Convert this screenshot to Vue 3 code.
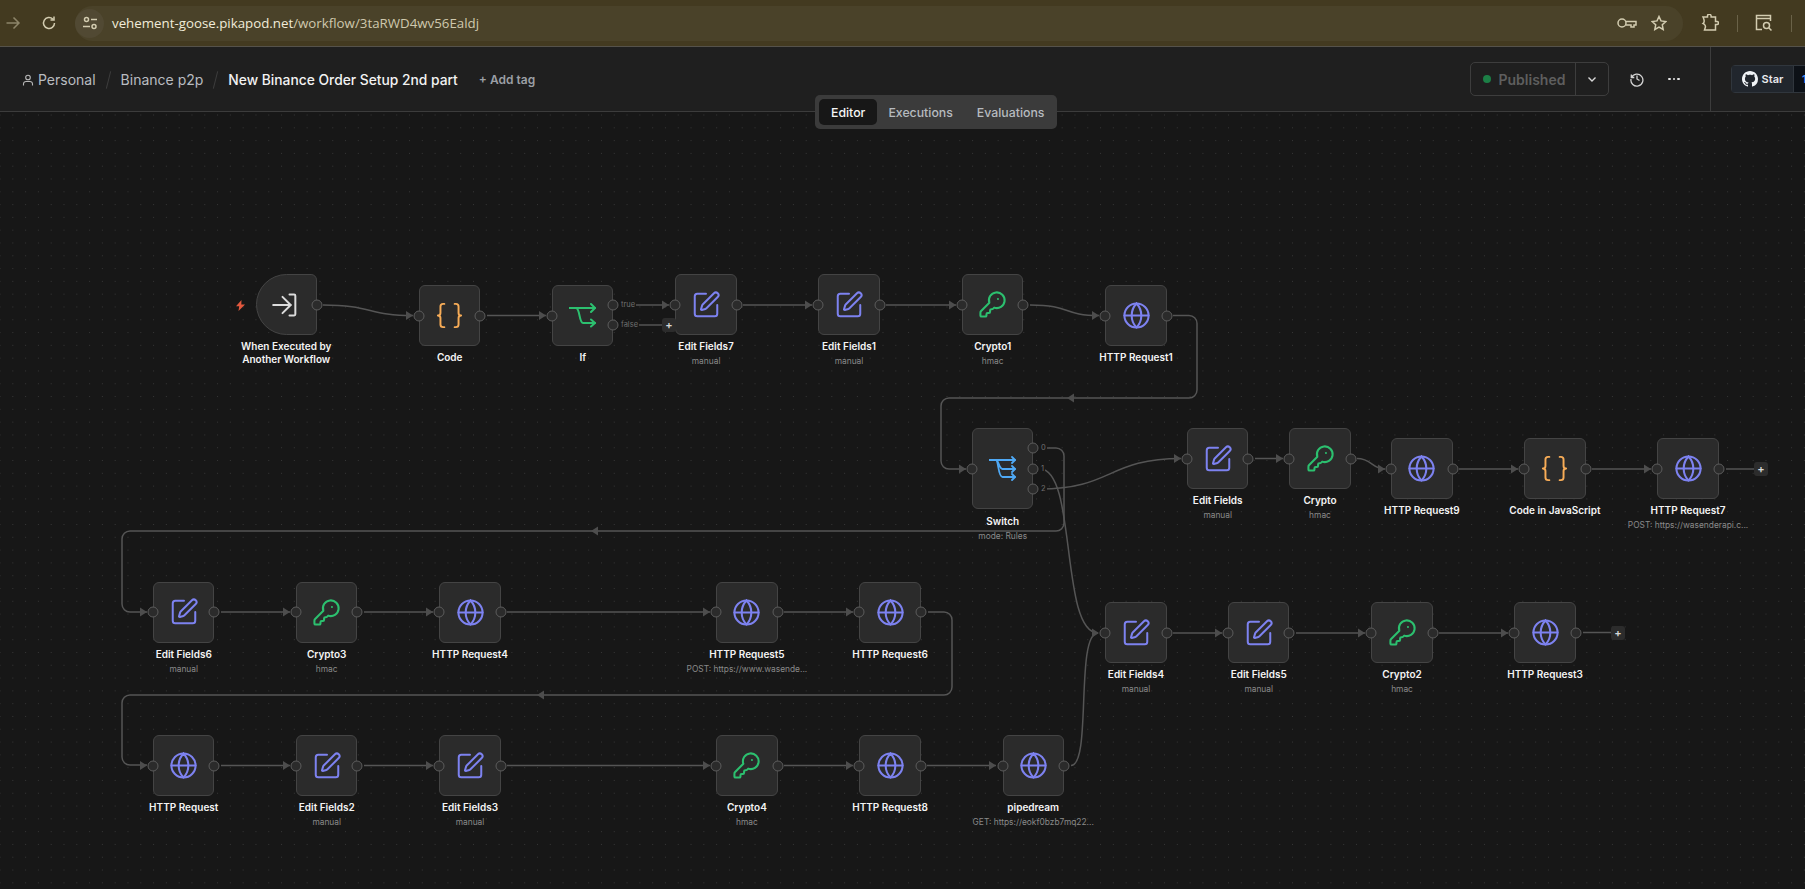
<script setup>
const TOP = 112

const icons = {
  edit: { vb: '0 0 24 24', size: 30, color: '#7d82f0', sw: 1.6, paths: ['M12 3H5a2 2 0 0 0-2 2v14a2 2 0 0 0 2 2h14a2 2 0 0 0 2-2v-7', 'M18.375 2.625a1 1 0 0 1 3 3l-9.013 9.014a2 2 0 0 1-.853.505l-2.873.84a.5.5 0 0 1-.62-.62l.84-2.873a2 2 0 0 1 .506-.852z'] },
  key: { vb: '0 0 24 24', size: 29, color: '#2cc06f', sw: 1.7, paths: ['M2.586 17.414A2 2 0 0 0 2 18.828V21a1 1 0 0 0 1 1h3a1 1 0 0 0 1-1v-1a1 1 0 0 1 1-1h1a1 1 0 0 0 1-1v-1a1 1 0 0 1 1-1h.172a2 2 0 0 0 1.414-.586l.814-.814a6.5 6.5 0 1 0-4-4z', 'M16.5 7.5h.01'] },
  globe: { vb: '0 0 24 24', size: 29, color: '#7d82f0', sw: 1.7, paths: ['M22 12a10 10 0 1 1-20 0 10 10 0 0 1 20 0z', 'M12 2a14.5 14.5 0 0 0 0 20 14.5 14.5 0 0 0 0-20', 'M2 12h20'] },
  code: { vb: '0 0 24 24', size: 31, color: '#f7ac57', sw: 1.5, paths: ['M8 3H7a2 2 0 0 0-2 2v5a2 2 0 0 1-2 2 2 2 0 0 1 2 2v5c0 1.1.9 2 2 2h1', 'M16 21h1a2 2 0 0 0 2-2v-5c0-1.1.9-2 2-2a2 2 0 0 1-2-2V5a2 2 0 0 0-2-2h-1'] },
  branch: { vb: '0 0 27 25', size: 27, color: '#2cc06f', sw: 2, paths: ['M0 5h26', 'M22 1l4 4-4 4', 'M7 5c4 0 3 15 7 15h12', 'M22 16.5l4 3.5-4 3.5'] },
  route: { vb: '0 0 27 23', size: 27, color: '#4fa9f5', sw: 1.8, paths: ['M0 3h26', 'M23 0l3 3-3 3', 'M7 3c2.500 0 3 9 6.500 9h12.500', 'M23 9l3 3-3 3', 'M7 3c2.500 0 2 17 6.500 17h12.500', 'M23 17l3 3-3 3'] },
  enter: { vb: '0 0 24 24', size: 28, color: '#dcdcdc', sw: 1.7, paths: ['M15 3h4a1 1 0 0 1 1 1v16a1 1 0 0 1-1 1h-4', 'M9 5l7 7-7 7', 'M16 12H1'] },
}

const n = (x, y, icon, name, sub = '', extra = {}) => ({ x, y, icon, name, sub, ...extra })

const nodes = [
  n(255.5, 274, 'enter', 'When Executed by\nAnother Workflow', '', { trigger: true, noIn: true }),
  n(419, 285, 'code', 'Code'),
  n(552, 285, 'branch', 'If', '', { outs: [{ y: 20, label: 'true' }, { y: 40, label: 'false' }] }),
  n(675.4, 274, 'edit', 'Edit Fields7', 'manual'),
  n(818.3, 274, 'edit', 'Edit Fields1', 'manual'),
  n(962, 274, 'key', 'Crypto1', 'hmac'),
  n(1105.3, 285, 'globe', 'HTTP Request1'),
  n(972, 428, 'route', 'Switch', 'mode: Rules', { h: 81, outs: [{ y: 20, label: '0' }, { y: 41, label: '1' }, { y: 61, label: '2' }], inY: 41 }),
  n(1187, 428, 'edit', 'Edit Fields', 'manual'),
  n(1289.3, 428, 'key', 'Crypto', 'hmac'),
  n(1391.2, 438, 'globe', 'HTTP Request9'),
  n(1524.2, 438, 'code', 'Code in JavaScript'),
  n(1657.3, 438, 'globe', 'HTTP Request7', 'POST: https://wasenderapi.c...'),
  n(153, 581.5, 'edit', 'Edit Fields6', 'manual'),
  n(296, 581.5, 'key', 'Crypto3', 'hmac'),
  n(439.3, 581.5, 'globe', 'HTTP Request4'),
  n(716.2, 581.5, 'globe', 'HTTP Request5', 'POST: https://www.wasende...'),
  n(859.3, 581.5, 'globe', 'HTTP Request6'),
  n(153, 735, 'globe', 'HTTP Request'),
  n(296, 735, 'edit', 'Edit Fields2', 'manual'),
  n(439.3, 735, 'edit', 'Edit Fields3', 'manual'),
  n(716.2, 735, 'key', 'Crypto4', 'hmac'),
  n(859.3, 735, 'globe', 'HTTP Request8'),
  n(1002.5, 735, 'globe', 'pipedream', 'GET: https://eokf0bzb7mq22...'),
  n(1105.3, 602, 'edit', 'Edit Fields4', 'manual'),
  n(1228, 602, 'edit', 'Edit Fields5', 'manual'),
  n(1371.3, 602, 'key', 'Crypto2', 'hmac'),
  n(1514.3, 602, 'globe', 'HTTP Request3'),
]

const nodeStyle = (d) => ({ left: d.x + 'px', top: d.y - TOP + 'px' })

const edges = [
  'M323 305C372 305 368 315.5 413 315.5',
  'M487 315.5H546',
  'M620 305H669',
  'M620 325H663',
  'M743 305H812',
  'M886 305H956',
  'M1030 305C1072 305 1062 315.5 1099 315.5',
  'M1173 315.5H1189a8 8 0 0 1 8 8V390a8 8 0 0 1-8 8H949a8 8 0 0 0-8 8V461a8 8 0 0 0 8 8H966',
  'M1040 448H1056a8 8 0 0 1 8 8V523a8 8 0 0 1-8 8H130a8 8 0 0 0-8 8V604a8 8 0 0 0 8 8H147',
  'M1040 469C1077 469 1060 633 1098 633',
  'M1040 489C1112 489 1108 458.5 1181 458.5',
  'M1255 458.5H1283',
  'M1357 458.5C1372 458.5 1372 469 1385 469',
  'M1459 469H1518',
  'M1592 469H1651',
  'M1726 469H1755',
  'M221 612H290',
  'M364 612H433',
  'M507 612H710',
  'M784 612H853',
  'M928 612H944a8 8 0 0 1 8 8V687a8 8 0 0 1-8 8H130a8 8 0 0 0-8 8V757a8 8 0 0 0 8 8H147',
  'M221 765.5H290',
  'M364 765.5H433',
  'M507 765.5H710',
  'M784 765.5H853',
  'M927 765.5H996',
  'M1071 765.5C1092 765.5 1075 633 1098 633',
  'M1173 633H1222',
  'M1296 633H1365',
  'M1439 633H1508',
  'M1583 632.5H1612',
]

const arrows = [
  [413, 315.5], [546, 315.5], [669, 305], [812, 305], [956, 305], [1099, 315.5], [966, 469],
  [147, 612], [1181, 458.5], [1283, 458.5], [1385, 469], [1518, 469], [1651, 469],
  [290, 612], [433, 612], [710, 612], [853, 612], [147, 765.5], [290, 765.5], [433, 765.5],
  [710, 765.5], [853, 765.5], [996, 765.5], [1099, 633], [1222, 633], [1365, 633], [1508, 633],
]
const arrowPoints = ([x, y]) => `${x},${y} ${x - 7},${y - 4.5} ${x - 7},${y + 4.5}`
const leftArrows = [[1067, 398], [591, 531], [537, 695]]
const leftPoints = ([x, y]) => `${x},${y} ${x + 7},${y - 4.5} ${x + 7},${y + 4.5}`

const pluses = [
  { x: 662, y: 318 },
  { x: 1754, y: 462 },
  { x: 1611, y: 625.5 },
]
const plusStyle = (p) => ({ left: p.x + 'px', top: p.y - TOP + 'px' })
const outTop = (o) => ({ top: o.y + 'px' })
const ghPath = 'M8 0C3.58 0 0 3.58 0 8c0 3.54 2.29 6.53 5.47 7.59.4.07.55-.17.55-.38 0-.19-.01-.82-.01-1.49-2.01.37-2.53-.49-2.69-.94-.09-.23-.48-.94-.82-1.13-.28-.15-.68-.52-.01-.53.63-.01 1.08.58 1.23.82.72 1.21 1.87.87 2.33.66.07-.52.28-.87.51-1.07-1.78-.2-3.64-.89-3.64-3.95 0-.87.31-1.59.82-2.15-.08-.2-.36-1.02.08-2.12 0 0 .67-.21 2.2.82.64-.18 1.32-.27 2-.27.68 0 1.36.09 2 .27 1.53-1.04 2.2-.82 2.2-.82.44 1.1.16 1.92.08 2.12.51.56.82 1.27.82 2.15 0 3.07-1.87 3.75-3.65 3.95.29.25.54.73.54 1.48 0 1.07-.01 1.93-.01 2.2 0 .21.15.46.55.38A8.013 8.013 0 0016 8c0-4.42-3.58-8-8-8z'
</script>

<template>
  <div class="page">
    <div class="chrome">
      <svg class="ci back" width="16" height="16" viewBox="0 0 16 16"><path d="M1.5 8h12.5M8.5 2.5 14 8l-5.500 5.500" /></svg>
      <svg class="ci reload" width="16" height="16" viewBox="0 0 16 16"><path d="M13.500 8a5.500 5.500 0 1 1-1.700-4M13 1.500V5H9.500" /></svg>
      <div class="address">
        <span class="chip">
          <svg class="ci" width="16" height="16" viewBox="0 0 16 16"><circle cx="4.500" cy="4.500" r="2" /><path d="M9 4.500h6M1 11.500h7" /><circle cx="12" cy="11.500" r="2" /></svg>
        </span>
        <span class="url"><span class="host">vehement-goose.pikapod.net</span><span class="path">/workflow/3taRWD4wv56Ealdj</span></span>
        <svg class="ci keyi" width="20" height="12" viewBox="0 0 20 12"><circle cx="5" cy="6" r="4" /><path d="M9 4.500h10v3.500h-2v2h-3V8H9" /></svg>
        <svg class="ci stari" width="16" height="16" viewBox="0 0 16 16"><path d="M8 1.500l2 4.400 4.800.6-3.500 3.300.9 4.700L8 12.200l-4.200 2.300.9-4.700L1.200 6.500 6 5.900z" /></svg>
      </div>
      <svg class="ci puzzle" width="18" height="18" viewBox="0 0 18 18"><path d="M2 3h4.500V2a1.800 1.800 0 0 1 3.600 0v1h4.400v4.500H16a1.500 1.500 0 0 1 0 3h-1.500V16H3.500l.8-2.500c.5-1.500 0-2.500-1.300-3.500L2 9.500c1.500-1 1.500-3.500 0-6.500z" /></svg>
      <span class="sep"></span>
      <svg class="ci lens" width="18" height="18" viewBox="0 0 18 18"><path d="M7 15.500H1.500V1.500h14V7M1.500 4.500h14" /><circle cx="11.500" cy="11.500" r="3" /><path d="M14 14l2.500 2.500" /></svg>
      <span class="sep sep2"></span>
    </div>

    <header class="bar">
      <nav class="crumbs">
        <svg class="person" width="12" height="12" viewBox="0 0 12 12"><circle cx="6" cy="3.500" r="2.300" /><path d="M1.500 11.500V10a2.500 2.500 0 0 1 2.500-2.500h4A2.500 2.500 0 0 1 10.500 10v1.500" /></svg>
        <span class="crumb">Personal</span>
        <span class="slash"></span>
        <span class="crumb">Binance p2p</span>
        <span class="slash"></span>
        <span class="title">New Binance Order Setup 2nd part</span>
        <span class="addtag">+ Add tag</span>
      </nav>
      <div class="actions">
        <div class="publish">
          <span class="pub-main"><span class="dot"></span>Published</span>
          <span class="pub-more">
            <svg width="12" height="12" viewBox="0 0 12 12"><path d="M2.500 4.500 6 8l3.500-3.500" /></svg>
          </span>
        </div>
        <svg class="history" width="16" height="16" viewBox="0 0 16 16"><path d="M2.300 3.500v3h3M2.500 6.500A6 6 0 1 1 2 8M8 4.500V8l2.500 1.500" /></svg>
        <span class="dots"><i></i><i></i><i></i></span>
        <div class="ghwrap">
          <div class="ghstar">
            <span class="ghbtn">
              <svg width="16" height="16" viewBox="0 0 16 16"><path :d="ghPath" /></svg>
              Star
            </span>
            <span class="ghcount">1</span>
          </div>
        </div>
      </div>
    </header>

    <div class="tabs">
      <span class="tab active">Editor</span>
      <span class="tab">Executions</span>
      <span class="tab">Evaluations</span>
    </div>

    <main class="canvas">
      <svg class="wires" width="1805" height="777" viewBox="0 112 1805 777">
        <path v-for="(d, i) in edges" :key="i" :d="d" />
        <polygon v-for="(a, i) in arrows" :key="'a' + i" :points="arrowPoints(a)" />
        <polygon v-for="(a, i) in leftArrows" :key="'l' + i" :points="leftPoints(a)" />
      </svg>

      <div v-for="d in nodes" :key="d.name" class="node" :style="nodeStyle(d)">
        <svg v-if="d.trigger" class="bolt" width="9" height="11" viewBox="0 0 9 11"><path d="M5.500 0 0 6.200h3.200L2.500 11 9 4.500H5.300z" /></svg>
        <div class="box" :class="{ trig: d.trigger, tall: d.h }">
          <svg
            :width="icons[d.icon].size"
            :height="icons[d.icon].size"
            :viewBox="icons[d.icon].vb"
            fill="none"
            :stroke="icons[d.icon].color"
            :stroke-width="icons[d.icon].sw"
            stroke-linecap="round"
            stroke-linejoin="round"
          >
            <path v-for="p in icons[d.icon].paths" :key="p" :d="p" />
          </svg>
        </div>
        <span v-if="!d.noIn" class="port in" :class="{ mid: d.inY }"></span>
        <template v-if="d.outs">
          <template v-for="o in d.outs" :key="o.label">
            <span class="port out" :style="outTop(o)"></span>
            <span class="outlabel" :style="outTop(o)">{{ o.label }}</span>
          </template>
        </template>
        <span v-else class="port out"></span>
        <div class="label" :class="{ lower: d.h }">
          <div class="name">{{ d.name }}</div>
          <div v-if="d.sub" class="sub">{{ d.sub }}</div>
        </div>
      </div>

      <span v-for="p in pluses" :key="p.x" class="plus" :style="plusStyle(p)">+</span>
    </main>
  </div>
</template>

<style>
html, body { margin: 0; background: #171717; overflow: hidden; }
</style>

<style scoped>
.page {
  position: relative;
  width: 1805px;
  height: 889px;
  display: flex;
  flex-direction: column;
  overflow: hidden;
  font-family: Inter, "Liberation Sans", sans-serif;
  background: #171717;
}
.chrome {
  height: 46px;
  flex: none;
  display: flex;
  align-items: center;
  background: #433a20;
  border-bottom: 1px solid #55524a;
  box-sizing: content-box;
}
.ci { fill: none; stroke: #d3ccb0; stroke-width: 1.5; flex: none; }
.back { margin-left: 5px; stroke: #8d8569; }
.reload { margin-left: 20px; }
.address {
  margin-left: 18px;
  width: 1608px;
  height: 35px;
  display: flex;
  align-items: center;
  background: #4a4229;
  border-radius: 18px;
}
.chip {
  width: 29px;
  height: 29px;
  border-radius: 50%;
  background: #514933;
  display: flex;
  align-items: center;
  justify-content: center;
}
.url {
  margin-left: 8px;
  font-family: "Open Sans", "Noto Sans", sans-serif;
  font-size: 13.300px;
  white-space: nowrap;
}
.host { color: #f1ecd9; }
.path { color: #cfc8ad; }
.keyi { margin-left: auto; stroke: #d3ccb0; }
.stari { margin-left: 14px; margin-right: 16px; }
.puzzle { margin-left: 18px; }
.sep { width: 1px; height: 17px; background: #6a6248; margin-left: 18px; flex: none; }
.lens { margin-left: 17px; }
.sep2 { margin-left: 18px; }

.bar {
  height: 64px;
  flex: none;
  display: flex;
  align-items: center;
  background: #1f1f1f;
  border-bottom: 1px solid #3c3c3c;
}
.crumbs { display: flex; align-items: center; padding: 1px 0 0 22px; }
.person { fill: none; stroke: #b8b8b8; stroke-width: 1.100; margin-right: 4px; }
.crumb { font-size: 14px; color: #b9bcc0; white-space: nowrap; }
.slash {
  width: 1px;
  height: 18px;
  margin: 0 12px 0 12px;
  background: #3e3e3e;
  transform: rotate(14deg);
}
.title { font-size: 13.800px; color: #f2f2f2; font-weight: 500; white-space: nowrap; }
.addtag { margin-left: 21px; font-size: 12px; font-weight: 600; color: #9b9fa5; white-space: nowrap; }

.actions { margin-left: auto; display: flex; align-items: center; height: 100%; }
.publish {
  width: 139.500px;
  height: 34px;
  box-sizing: border-box;
  display: flex;
  border: 1px solid #3d3d3d;
  border-radius: 5px;
}
.pub-main {
  flex: 1;
  display: flex;
  align-items: center;
  gap: 8px;
  padding-left: 12px;
  font-size: 14px;
  font-weight: 600;
  color: #5e5e5e;
  border-right: 1px solid #3d3d3d;
}
.dot { width: 8px; height: 8px; border-radius: 50%; background: #1c7f46; }
.pub-more { width: 32px; display: flex; align-items: center; justify-content: center; }
.pub-more svg { fill: none; stroke: #d8d8d8; stroke-width: 1.400; }
.history { fill: none; stroke: #d4d4d4; stroke-width: 1.300; margin-left: 20px; }
.dots { display: flex; gap: 2px; margin-left: 23px; }
.dots i { width: 2.500px; height: 2.500px; border-radius: 50%; background: #e6e6e6; display: block; }
.ghwrap {
  margin-left: 30px;
  width: 95.500px;
  height: 100%;
  box-sizing: border-box;
  border-left: 1px solid #3c3c3c;
  display: flex;
  align-items: center;
  padding-left: 20.500px;
  overflow: hidden;
}
.ghstar {
  display: flex;
  height: 28px;
  flex: none;
  border: 1px solid #30363d;
  border-radius: 4px;
  box-sizing: border-box;
  font-size: 11px;
  font-weight: 600;
}
.ghbtn {
  width: 62px;
  box-sizing: border-box;
  display: flex;
  align-items: center;
  justify-content: center;
  gap: 4px;
  background: #21262d;
  color: #e8eaed;
  border-right: 1px solid #30363d;
}
.ghbtn svg { fill: #f0f3f6; }
.ghcount { width: 30px; padding-left: 8px; background: #0d1117; color: #4493f8; line-height: 26px; }

.tabs {
  position: absolute;
  left: 815px;
  top: 95px;
  z-index: 3;
  width: 242px;
  height: 34px;
  box-sizing: border-box;
  padding: 4px;
  display: flex;
  background: #3b3b3b;
  border-radius: 5px;
  font-size: 12.300px;
  font-weight: 500;
}
.tab {
  display: flex;
  align-items: center;
  padding: 0 12px;
  color: #b6babf;
  white-space: nowrap;
}
.tab.active { background: #171717; color: #f5f5f5; border-radius: 5px; margin-right: -1px; }

.canvas {
  position: relative;
  flex: 1;
  overflow: hidden;
  background-color: #171717;
  background-image: radial-gradient(circle at center, #363636 0.6px, transparent 0.8px);
  background-size: 12.800px 12.800px;
  background-position: -6.400px -3.400px;
}
.wires { position: absolute; left: 0; top: 0; }
.wires path { fill: none; stroke: #555; stroke-width: 1.500; }
.wires polygon { fill: #4d4d4d; }

.node { position: absolute; width: 61.440px; }
.box {
  width: 61.440px;
  height: 61.440px;
  box-sizing: border-box;
  display: flex;
  align-items: center;
  justify-content: center;
  background: #2b2b2b;
  border: 1px solid #444;
  border-radius: 6px;
}
.box.trig { border-radius: 31px 6px 6px 31px; }
.box.tall { height: 81px; }
.bolt { position: absolute; left: -20px; top: 26px; fill: #e2583e; }
.port {
  position: absolute;
  width: 11px;
  height: 11px;
  box-sizing: border-box;
  border: 1px solid #5c5c5c;
  border-radius: 50%;
  background: #2b2b2b;
  transform: translate(-50%, -50%);
}
.port.in { left: 0; top: 30.700px; }
.port.in.mid { top: 41px; }
.port.out { left: 61.440px; top: 30.700px; }
.outlabel {
  position: absolute;
  left: 68px;
  transform: translateY(-50%);
  font-size: 7.500px;
  line-height: 10px;
  color: #6f6f6f;
  background: #171717;
  padding: 0 1px;
}
.label {
  position: absolute;
  left: 50%;
  top: 100%;
  transform: translateX(-50%);
  margin-top: 5px;
  text-align: center;
  white-space: nowrap;
}
.label.lower { margin-top: 6px; }
.name {
  font-size: 10px;
  line-height: 13px;
  font-weight: 600;
  color: #f4f4f4;
  white-space: pre;
}
.sub {
  margin-top: 2px;
  font-size: 8.400px;
  line-height: 12px;
  color: #8a8a8a;
}
.plus {
  position: absolute;
  width: 14px;
  height: 14px;
  display: flex;
  align-items: center;
  justify-content: center;
  background: #2c2c2c;
  border-radius: 3px;
  color: #d8d8d8;
  font-size: 11px;
  font-weight: 600;
  line-height: 14px;
}
</style>
